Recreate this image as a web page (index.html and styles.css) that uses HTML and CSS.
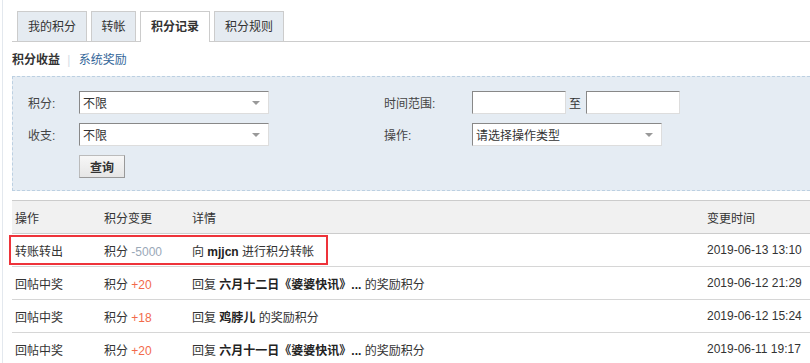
FILE: index.html
```html
<!DOCTYPE html>
<html lang="zh-CN">
<head>
  <meta charset="UTF-8" />
  <title>积分记录</title>
  <link rel="stylesheet" href="styles.css">
</head>
<body>
  <div class="page">

    <!-- Tabs -->
    <ul class="tabs">
      <li><a href="#">我的积分</a></li>
      <li class="short"><a href="#">转帐</a></li>
      <li class="active"><a href="#">积分记录</a></li>
      <li><a href="#">积分规则</a></li>
    </ul>

    <div class="subnav">
      <strong>积分收益</strong>
      <span class="sep">|</span>
      <a href="#">系统奖励</a>
    </div>

    <!-- Filter -->
    <form class="filter">
      <div class="frow">
        <label class="flabel">积分:</label>
        <div class="select"><span>不限</span><i class="arrow"></i></div>
        <label class="flabel wide">时间范围:</label>
        <input class="date" type="text">
        <span class="to">至</span>
        <input class="date" type="text">
      </div>
      <div class="frow">
        <label class="flabel">收支:</label>
        <div class="select"><span>不限</span><i class="arrow"></i></div>
        <label class="flabel wide">操作:</label>
        <div class="select"><span>请选择操作类型</span><i class="arrow"></i></div>
      </div>
      <div class="frow">
        <span class="flabel"></span>
        <button type="button" class="btn">查询</button>
      </div>
    </form>

    <!-- Records -->
    <div class="records">
      <table>
        <thead>
          <tr>
            <th class="c1">操作</th>
            <th class="c2">积分变更</th>
            <th class="c3">详情</th>
            <th class="c4">变更时间</th>
          </tr>
        </thead>
        <tbody>
          <tr>
            <td>转账转出</td>
            <td>积分 <span class="minus">-5000</span></td>
            <td>向 <b>mjjcn</b> 进行积分转帐</td>
            <td>2019-06-13 13:10</td>
          </tr>
          <tr>
            <td>回帖中奖</td>
            <td>积分 <span class="plus">+20</span></td>
            <td>回复 <b>六月十二日《婆婆快讯》...</b> 的奖励积分</td>
            <td>2019-06-12 21:29</td>
          </tr>
          <tr>
            <td>回帖中奖</td>
            <td>积分 <span class="plus">+18</span></td>
            <td>回复 <b>鸡脖儿</b> 的奖励积分</td>
            <td>2019-06-12 15:24</td>
          </tr>
          <tr>
            <td>回帖中奖</td>
            <td>积分 <span class="plus">+20</span></td>
            <td>回复 <b>六月十一日《婆婆快讯》...</b> 的奖励积分</td>
            <td>2019-06-11 19:17</td>
          </tr>
        </tbody>
      </table>
      <div class="mark"></div>
    </div>

  </div>
</body>
</html>
```

FILE: styles.css
```css
body {
  margin: 0;
  font-family: "Liberation Sans", "Noto Sans CJK SC", sans-serif;
  font-size: 12px;
  color: #333;
  background: #fff;
  height: 363px;
  overflow: hidden;
}
a {
  text-decoration: none;
}
.page {
  margin-left: 2px;
  border-left: 1px solid #e3e8ee;
  padding: 11px 0 0 9px;
  min-height: 363px;
  box-sizing: border-box;
}

/* tabs */
.tabs {
  list-style: none;
  margin: 0;
  padding: 0 0 0 5px;
  display: flex;
  gap: 4px;
  border-bottom: 1px solid #ccc;
}
.tabs li {
  margin-bottom: -1px;
}
.tabs a {
  display: block;
  box-sizing: border-box;
  width: 70px;
  height: 30px;
  line-height: 30px;
  text-align: center;
  border: 1px solid #ccc;
  border-bottom: none;
  background: #e5ebf1;
  color: #333;
}
.tabs .short a {
  width: 45px;
}
.tabs .active a {
  background: #fff;
  font-weight: bold;
  height: 31px;
}

/* sub nav */
.subnav {
  height: 34px;
  line-height: 36px;
}
.subnav strong {
  color: #333;
}
.subnav .sep {
  color: #d5dde6;
  margin: 0 5px 0 4px;
}
.subnav a {
  color: #336699;
}

/* filter */
.filter {
  background: #e5ecf3;
  border-top: 1px dashed #bcd0e2;
  border-bottom: 1px dashed #bcd0e2;
  border-left: 1px dashed #bcd0e2;
  padding: 14px 0 12px 15px;
  display: flex;
  flex-direction: column;
  gap: 9px;
}
.frow {
  display: flex;
  align-items: center;
}
.flabel {
  width: 51px;
  color: #444;
}
.flabel.wide {
  width: 88px;
  margin-left: 115px;
}
.select {
  width: 177px;
  height: 21px;
  background: #fff;
  border: 1px solid #ddd;
  border-top-color: #888;
  border-left-color: #888;
  display: flex;
  align-items: center;
  justify-content: space-between;
  padding: 0 8px 0 3px;
}
.select span {
  color: #333;
}
.arrow {
  width: 0;
  height: 0;
  border-left: 4px solid transparent;
  border-right: 4px solid transparent;
  border-top: 4px solid #999;
}
.date {
  width: 92px;
  height: 21px;
  padding: 0;
  margin: 0;
  background: #fff;
  border: 1px solid #ddd;
  border-top-color: #888;
  border-left-color: #888;
}
.to {
  margin: 0 5px 0 3px;
}
.btn {
  width: 46px;
  height: 23px;
  padding: 0;
  font: bold 12px "Liberation Sans", "Noto Sans CJK SC", sans-serif;
  color: #333;
  background: linear-gradient(#f7f7f7, #e6e6e6);
  border: 1px solid #999;
  border-top-color: #bbb;
  border-left-color: #bbb;
}

/* table */
.records {
  position: relative;
  margin-top: 9px;
}
table {
  width: 100%;
  border-collapse: collapse;
}
th, td {
  height: 32px;
  text-align: left;
  font-weight: normal;
  padding: 0 0 0 3px;
  border-bottom: 1px solid #d6d6d6;
  white-space: nowrap;
}
thead th {
  background: #f1f1f1;
  border-top: 1px solid #ccc;
  border-bottom: 1px solid #ccc;
}
.c1 { width: 86px; }
.c2 { width: 85px; }
.c3 { width: 512px; }
td b {
  color: #222;
}
.minus {
  color: #9aa8b8;
}
.plus {
  color: #f26a4b;
}
.mark {
  position: absolute;
  left: -3px;
  top: 35px;
  width: 315px;
  height: 26px;
  border: 2px solid #ee333a;
}
```
